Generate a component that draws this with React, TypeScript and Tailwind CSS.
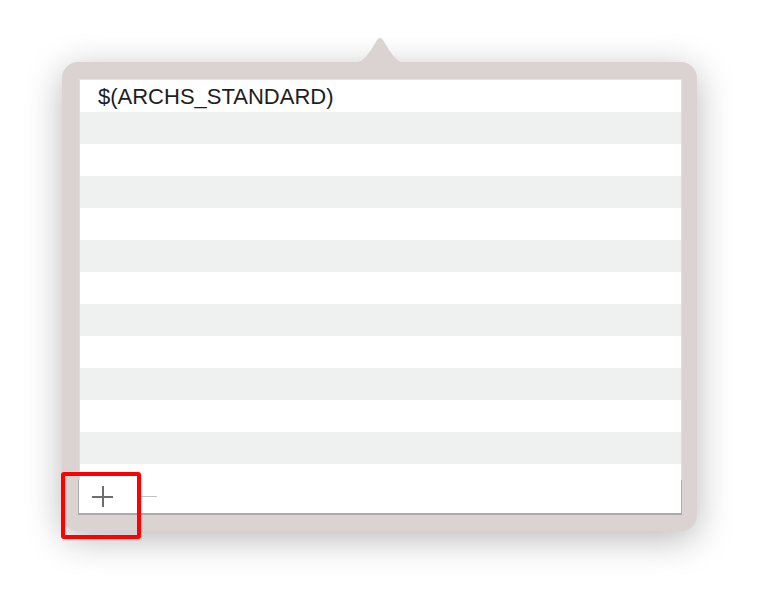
const rows = Array.from({ length: 13 }, (_, i) => i);

export default function App() {
  return (
    <div className="h-[594px] w-[760px] overflow-hidden bg-white pl-[62px] pt-[62px] font-['Liberation_Sans',Arial,sans-serif]">
      <div className="relative h-[469px] w-[635px] rounded-[16px] bg-[#dbd3d2] pb-[16px] pl-[17px] pr-[15px] pt-[17px] shadow-[0_8px_36px_rgba(0,0,0,0.28)]">
        {/* popover arrow */}
        <svg
          className="absolute left-[291px] top-[-25px]"
          width="52"
          height="26"
          viewBox="0 0 52 26"
        >
          <path
            d="M0 26 C8 26 12 21 18 13 L24 3 Q27 -1 30 3 L36 13 C42 21 46 26 52 26 Z"
            fill="#dbd3d2"
          />
        </svg>

        <div className="flex h-full flex-col border-t border-[#e4e1e0]">
          <div className="h-[400px] overflow-hidden border-x border-[#e2dedd] bg-white">
            {rows.map((i) => (
              <div
                key={i}
                className={`flex h-[32px] items-center px-[18px] text-[22px] text-[#1e1e1e] ${
                  i % 2 === 1 ? "bg-[#eff1f0]" : "bg-white"
                }`}
              >
                {i === 0 ? "$(ARCHS_STANDARD)" : null}
              </div>
            ))}
          </div>
          <div className="relative -ml-px flex h-[35px] items-center border-x border-b-2 border-[#aeaaaa] bg-white">
            <div className="relative ml-[13px] h-[21px] w-[21px]">
              <div className="absolute left-0 top-[10px] h-[2px] w-[21px] bg-[#6e6e6e]" />
              <div className="absolute left-[10px] top-0 h-[21px] w-[2px] bg-[#6e6e6e]" />
            </div>
            <div className="ml-[27px] h-px w-[17px] bg-[#c2c2c2]" />
          </div>
        </div>

        {/* highlight */}
        <div className="absolute left-[-1px] top-[410px] h-[67px] w-[80px] rounded-[3px] border-4 border-[#ff0000]" />
      </div>
    </div>
  );
}
